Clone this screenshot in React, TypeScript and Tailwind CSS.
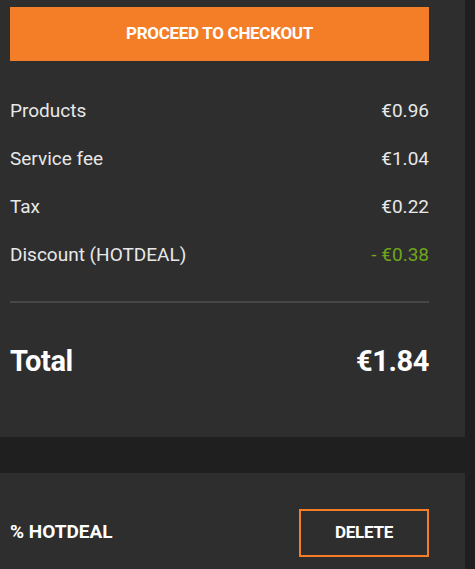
import React from "react";

const rows = [
	{ label: "Products", value: "€0.96" },
	{ label: "Service fee", value: "€1.04" },
	{ label: "Tax", value: "€0.22" },
	{ label: "Discount (HOTDEAL)", value: "- €0.38", discount: true },
];

const App: React.FC = () => {
	return (
		<div
			className="flex h-[569px] w-[475px] overflow-hidden bg-[#1f1f1f]"
			style={{ fontFamily: "Roboto, 'Liberation Sans', sans-serif" }}
		>
			<div className="flex w-[465px] flex-col">
				<div className="bg-[#2e2e2e] px-[10px] pt-[7px] pb-[53px]">
					<button className="flex h-[54px] w-[419px] items-center justify-center bg-[#f47d27] text-[17px] font-bold tracking-[-0.3px] text-white">
						PROCEED TO CHECKOUT
					</button>
					<div className="mt-[26px] flex w-[419px] flex-col">
						{rows.map((r) => (
							<div
								key={r.label}
								className="flex h-[48px] items-center justify-between text-[19px] text-[#e8e8e8]"
							>
								<span>{r.label}</span>
								<span className={r.discount ? "text-[#6ea51c]" : ""}>
									{r.value}
								</span>
							</div>
						))}
					</div>
					<div className="mt-[22px] h-[2px] w-[419px] bg-[#474747]" />
					<div className="mt-[37px] flex w-[419px] items-center justify-between text-[29px] font-bold tracking-[-0.4px] text-white">
						<span>Total</span>
						<span>€1.84</span>
					</div>
				</div>
				<div className="h-[36px] shrink-0" />
				<div className="flex flex-1 items-start bg-[#2e2e2e] px-[10px] pt-[36px]">
					<div className="flex w-[419px] items-center justify-between">
						<span className="text-[19px] font-bold text-white">% HOTDEAL</span>
						<button className="flex h-[48px] w-[130px] items-center justify-center border-2 border-[#f47d27] text-[17px] font-bold tracking-[-0.3px] text-white">
							DELETE
						</button>
					</div>
				</div>
			</div>
		</div>
	);
};

export default App;
